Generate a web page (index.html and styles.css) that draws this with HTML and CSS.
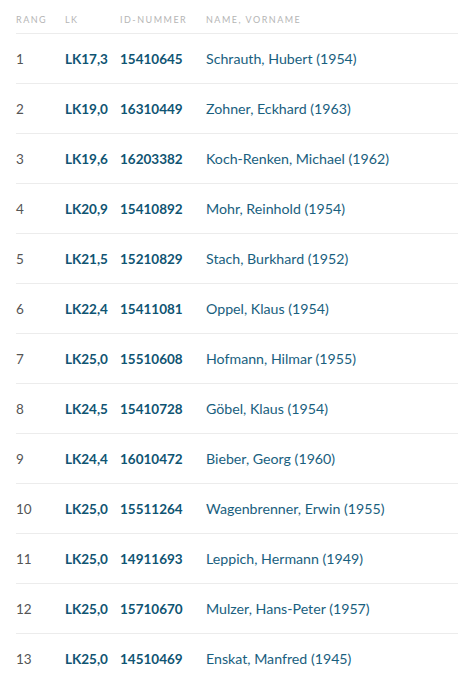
FILE: index.html
```html
<!DOCTYPE html>
<html lang="de">
<head>
<meta charset="utf-8">
<link rel="stylesheet" href="styles.css">
</head>
<body>
<table class="rank">
  <colgroup>
    <col class="c-rang"><col class="c-lk"><col class="c-id"><col class="c-name">
  </colgroup>
  <thead>
    <tr><th>Rang</th><th>LK</th><th>ID-Nummer</th><th>Name, Vorname</th></tr>
  </thead>
  <tbody>
    <tr><td class="r">1</td><td class="b">LK17,3</td><td class="b">15410645</td><td class="n">Schrauth, Hubert (1954)</td></tr>
    <tr><td class="r">2</td><td class="b">LK19,0</td><td class="b">16310449</td><td class="n">Zohner, Eckhard (1963)</td></tr>
    <tr><td class="r">3</td><td class="b">LK19,6</td><td class="b">16203382</td><td class="n">Koch-Renken, Michael (1962)</td></tr>
    <tr><td class="r">4</td><td class="b">LK20,9</td><td class="b">15410892</td><td class="n">Mohr, Reinhold (1954)</td></tr>
    <tr><td class="r">5</td><td class="b">LK21,5</td><td class="b">15210829</td><td class="n">Stach, Burkhard (1952)</td></tr>
    <tr><td class="r">6</td><td class="b">LK22,4</td><td class="b">15411081</td><td class="n">Oppel, Klaus (1954)</td></tr>
    <tr><td class="r">7</td><td class="b">LK25,0</td><td class="b">15510608</td><td class="n">Hofmann, Hilmar (1955)</td></tr>
    <tr><td class="r">8</td><td class="b">LK24,5</td><td class="b">15410728</td><td class="n">Göbel, Klaus (1954)</td></tr>
    <tr><td class="r">9</td><td class="b">LK24,4</td><td class="b">16010472</td><td class="n">Bieber, Georg (1960)</td></tr>
    <tr><td class="r">10</td><td class="b">LK25,0</td><td class="b">15511264</td><td class="n">Wagenbrenner, Erwin (1955)</td></tr>
    <tr><td class="r">11</td><td class="b">LK25,0</td><td class="b">14911693</td><td class="n">Leppich, Hermann (1949)</td></tr>
    <tr><td class="r">12</td><td class="b">LK25,0</td><td class="b">15710670</td><td class="n">Mulzer, Hans-Peter (1957)</td></tr>
    <tr><td class="r">13</td><td class="b">LK25,0</td><td class="b">14510469</td><td class="n">Enskat, Manfred (1945)</td></tr>
  </tbody>
</table>
</body>
</html>
```

FILE: styles.css
```css
html, body {
  margin: 0;
  padding: 0;
  background: #ffffff;
}
body {
  font-family: Lato, "Open Sans", "Noto Sans", sans-serif;
  overflow: hidden;
}
.rank {
  margin-left: 16px;
  width: 442px;
  border-collapse: collapse;
  table-layout: fixed;
}
.c-rang { width: 49px; }
.c-lk { width: 55px; }
.c-id { width: 86px; }
.rank th {
  text-align: left;
  font-weight: 400;
  font-size: 9px;
  line-height: 11px;
  letter-spacing: 1.5px;
  text-transform: uppercase;
  color: #b5b5b5;
  padding: 14px 0 8px;
  border-bottom: 1px solid #ececec;
}
.rank td {
  height: 49px;
  padding: 0;
  font-size: 13.5px;
  vertical-align: middle;
  border-bottom: 1px solid #ececec;
  white-space: nowrap;
}
.rank td.r { color: #555555; }
.rank td.b { color: #0f5472; font-weight: 700; }
.rank td.n { color: #19607e; font-size: 14.2px; }
```
